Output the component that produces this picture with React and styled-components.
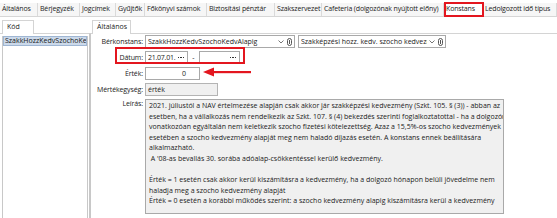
import React from 'react';
import styled, { createGlobalStyle } from 'styled-components';

const GlobalStyle = createGlobalStyle`
  html, body {
    margin: 0;
    padding: 0;
    background: #ffffff;
  }
  body {
    font-family: "Open Sans", "Noto Sans", "Liberation Sans", sans-serif;
    font-size: 7px;
    color: #1a1a1a;
    width: 557px;
    height: 218px;
    overflow: hidden;
  }
`;

const Screen = styled.div`
  display: flex;
  flex-direction: column;
  width: 557px;
  height: 218px;
`;

const TopBar = styled.div`
  display: flex;
  align-items: flex-end;
  height: 17px;
  box-sizing: border-box;
  padding-top: 3px;
  border-bottom: 1px solid #d6d6d6;
  background: #ffffff;
  position: relative;
`;

const TopTab = styled.div`
  box-sizing: border-box;
  width: ${p => p.w}px;
  height: 13px;
  line-height: 12px;
  padding-left: 2px;
  letter-spacing: -0.15px;
  white-space: nowrap;
  overflow: hidden;
  border-right: 1px solid #dadada;
  background: ${p => (p.active ? '#ffffff' : '#f6f6f6')};
  color: #222;
`;

const RedFrame = styled.div`
  position: absolute;
  border: 2px solid #e3161f;
  box-sizing: border-box;
  left: ${p => p.x}px;
  top: ${p => p.y}px;
  width: ${p => p.w}px;
  height: ${p => p.h}px;
  pointer-events: none;
`;

const Main = styled.div`
  display: flex;
  flex: 1;
  min-height: 0;
`;

const LeftPanel = styled.div`
  display: flex;
  flex-direction: column;
  width: 90px;
  box-sizing: border-box;
`;

const RightPanel = styled.div`
  display: flex;
  flex-direction: column;
  flex: 1;
`;

const TabStrip = styled.div`
  display: flex;
  height: 16px;
  box-sizing: border-box;
  padding: 3px 0 0 ${p => p.pad}px;
`;

const PaneTab = styled.div`
  box-sizing: border-box;
  width: ${p => p.w}px;
  height: 14px;
  line-height: 12px;
  padding-left: 4px;
  border: 1px solid #d4d4d4;
  border-bottom: none;
  background: #ffffff;
  margin-bottom: -1px;
  position: relative;
  z-index: 1;
`;

const ListPane = styled.div`
  flex: 1;
  border-top: 1px solid #d4d4d4;
  border-right: 1px solid #c8c8c8;
  padding: 2px 1px 0 2px;
  box-sizing: border-box;
`;

const ListBox = styled.div`
  height: 100%;
  border-left: 1px solid #c8c8c8;
  border-right: 1px solid #c8c8c8;
  box-sizing: border-box;
`;

const ListItem = styled.div`
  height: 10px;
  line-height: 8px;
  padding-left: 1px;
  white-space: nowrap;
  overflow: hidden;
  background: ${p => (p.selected ? '#cbd9ea' : 'transparent')};
  border: 1px solid ${p => (p.selected ? '#9fb6d3' : 'transparent')};
  box-sizing: border-box;
`;

const FormPane = styled.div`
  flex: 1;
  border-top: 1px solid #d4d4d4;
  border-left: 1px solid #c8c8c8;
  padding: 1px 0 0 1px;
  position: relative;
`;

const FormGrid = styled.div`
  display: grid;
  grid-template-columns: 51px 1fr;
  grid-auto-rows: 13px;
  column-gap: 2px;
  row-gap: 3px;
`;

const Label = styled.div`
  text-align: right;
  line-height: ${p => (p.top ? 10 : 13)}px;
  white-space: nowrap;
  letter-spacing: -0.1px;
`;

const Controls = styled.div`
  display: flex;
  align-items: stretch;
  gap: ${p => p.gap || 0}px;
`;

const Box = styled.div`
  box-sizing: border-box;
  width: ${p => p.w}px;
  height: 13px;
  border: 1px solid ${p => (p.muted ? '#b4b4b4' : '#a9a9a9')};
  background: ${p => (p.muted ? '#f0f0f0' : '#ffffff')};
  display: flex;
  align-items: center;
  padding: 0 ${p => (p.right ? 13 : 2)}px 0 2px;
  line-height: 11px;
  white-space: nowrap;
  overflow: hidden;
  justify-content: ${p => (p.right ? 'flex-end' : 'flex-start')};
`;

const BoxText = styled.span`
  flex: 1;
  min-width: 0;
  overflow: hidden;
  letter-spacing: ${p => (p.tight ? '-0.25px' : 'normal')};
`;

const Chevron = styled.span`
  margin: 0 3px 0 2px;
  display: flex;
`;

const Dots = styled.span`
  display: flex;
  flex-shrink: 0;
  gap: 1px;
  margin-left: 1px;
  margin-right: 1px;
`;

const Dot = styled.i`
  width: 1.3px;
  height: 1.3px;
  background: #333;
`;

const Dash = styled.span`
  width: 11px;
  text-align: center;
  line-height: 13px;
`;

const TextArea = styled.div`
  box-sizing: border-box;
  width: 359px;
  height: 115px;
  border: 1px solid #a9a9a9;
  background: #f0f0f0;
  padding: 1px 3px;
  line-height: 10.6px;
  white-space: pre;
  overflow: hidden;
`;

const Arrow = styled.svg`
  position: absolute;
  left: 112px;
  top: 33px;
`;

const topTabs = [
  ['Általános', 38],
  ['Bérjegyzék', 42],
  ['Jogcímek', 36],
  ['Gyűjtők', 29],
  ['Főkönyvi számok', 62],
  ['Biztosítási pénztár', 68],
  ['Szakszervezet', 47],
  ['Cafeteria (dolgozónak nyújtott előny)', 122],
  ['Konstans', 39, true],
  ['Ledolgozott idő típus', 74],
];

const description = `2021. júliustól a NAV értelmezése alapján csak akkor jár szakképzési kedvezmény (Szkt. 105. § (3)) - abban az
esetben, ha a vállalkozás nem rendelkezik az Szkt. 107. § (4) bekezdés szerinti foglalkoztatottal - ha a dolgozóra
vonatkozóan egyáltalán nem keletkezik szocho fizetési kötelezettség. Azaz a 15,5%-os szocho kedvezmények
esetében a szocho kedvezmény alapját meg nem haladó díjazás esetén. A konstans ennek beállítására
alkalmazható.
 A '08-as bevallás 30. sorába adóalap-csökkentéssel kerülő kedvezmény.

Érték = 1 esetén csak akkor kerül kiszámításra a kedvezmény, ha a dolgozó hónapon belüli jövedelme nem
haladja meg a szocho kedvezmény alapját
Érték = 0 esetén a korábbi működés szerint: a szocho kedvezmény alapig kiszámításra kerül a kedvezmény`;

const InfoIcon = () => (
  <svg width="5" height="8" viewBox="0 0 5 8">
    <rect x="0.5" y="0.5" width="4" height="7" rx="2" fill="none" stroke="#555" strokeWidth="1" />
    <line x1="2.5" y1="2" x2="2.5" y2="6" stroke="#555" strokeWidth="1" />
  </svg>
);

const ChevronIcon = () => (
  <svg width="6" height="4" viewBox="0 0 6 4">
    <path d="M0.5 0.5 L3 3 L5.5 0.5" fill="none" stroke="#666" strokeWidth="0.9" />
  </svg>
);

const Combo = ({ w, text }) => (
  <Box w={w}>
    <BoxText>{text}</BoxText>
    <Chevron><ChevronIcon /></Chevron>
    <InfoIcon />
  </Box>
);

const DateBox = ({ w, text }) => (
  <Box w={w}>
    <BoxText tight>{text}</BoxText>
    <Dots><Dot /><Dot /><Dot /></Dots>
  </Box>
);

export default function App() {
  return (
    <Screen>
      <GlobalStyle />
      <TopBar>
        {topTabs.map(([name, w, active]) => (
          <TopTab key={name} w={w} active={active}>{name}</TopTab>
        ))}
        <RedFrame x={444} y={2} w={40} h={15} />
      </TopBar>
      <Main>
        <LeftPanel>
          <TabStrip pad={2}>
            <PaneTab w={32}>Kód</PaneTab>
          </TabStrip>
          <ListPane>
            <ListBox>
              <ListItem selected>SzakkHozzKedvSzochoKedvAlapig</ListItem>
            </ListBox>
          </ListPane>
        </LeftPanel>
        <RightPanel>
          <TabStrip pad={2}>
            <PaneTab w={39}>Általános</PaneTab>
          </TabStrip>
          <FormPane>
            <FormGrid>
              <Label>Bérkonstans:</Label>
              <Controls gap={3}>
                <Combo w={150} text="SzakkHozzKedvSzochoKedvAlapig" />
                <Combo w={148} text="Szakképzési hozz. kedv. szocho kedvezmény" />
              </Controls>
              <Label>Dátum:</Label>
              <Controls>
                <DateBox w={43} text="21.07.01." />
                <Dash>-</Dash>
                <DateBox w={41} text="" />
              </Controls>
              <Label>Érték:</Label>
              <Controls>
                <Box w={55} right>0</Box>
              </Controls>
              <Label>Mértékegység:</Label>
              <Controls>
                <Box w={73} muted>érték</Box>
              </Controls>
              <Label top>Leírás:</Label>
              <TextArea>{description}</TextArea>
            </FormGrid>
            <RedFrame x={24} y={13} w={130} h={17} />
            <Arrow width="48" height="10" viewBox="0 0 48 10">
              <polygon points="0,5 11,0.5 11,9.5" fill="#e3161f" />
              <rect x="10" y="4" width="38" height="2.2" fill="#e3161f" />
            </Arrow>
          </FormPane>
        </RightPanel>
      </Main>
    </Screen>
  );
}
